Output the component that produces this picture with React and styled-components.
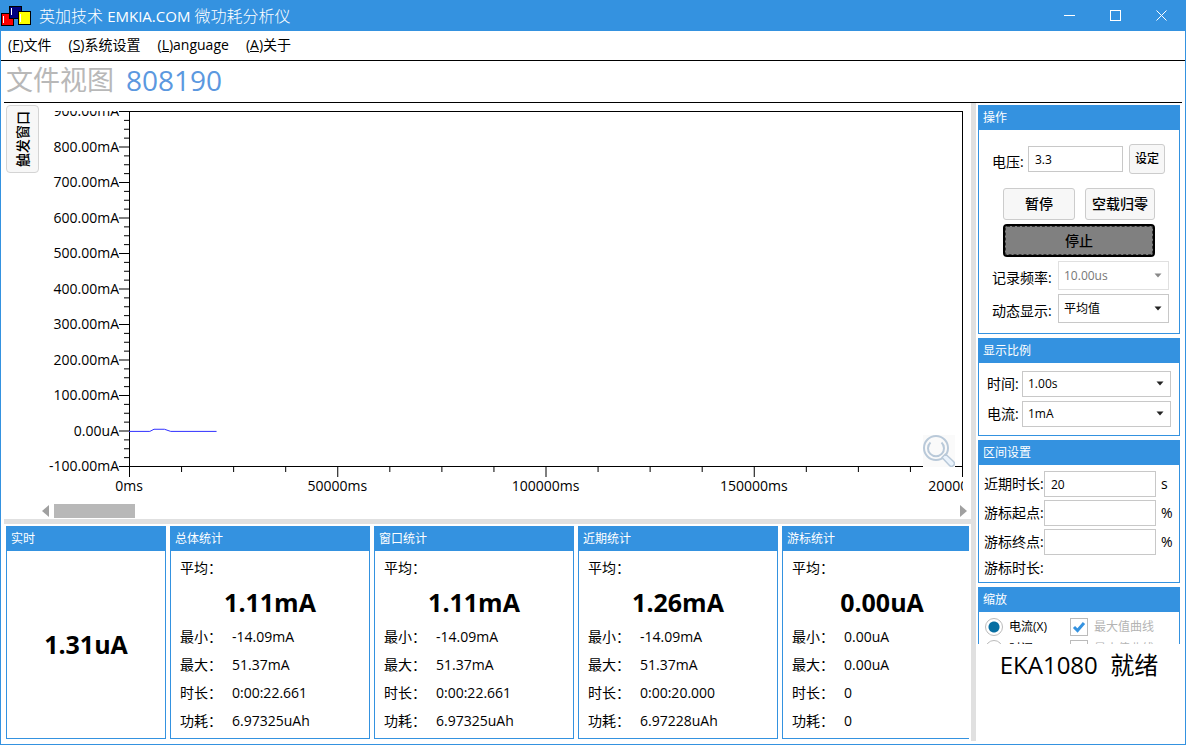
import { useState } from 'react';
import styled, { createGlobalStyle } from 'styled-components';

const BLUE = '#3492e0';
const SPLITTER = '#e0e0e0';

const GlobalStyle = createGlobalStyle`
  * {
    box-sizing: border-box;
  }

  body {
    margin: 0;
    background: #ffffff;
    color: #000000;
    font-family: 'Open Sans', 'Noto Sans CJK SC', sans-serif;
    font-size: 14px;
    line-height: 20px;
  }

  button,
  input,
  select {
    margin: 0;
    color: inherit;
    font: inherit;
  }
`;

// --- WINDOW FRAME ---

const Window = styled.div`
  display: flex;
  flex-direction: column;
  height: 100vh;
  overflow: hidden;
  border: 1px solid ${BLUE};
  border-top: none;
`;

const TitleBar = styled.header`
  display: flex;
  flex: none;
  align-items: center;
  height: 31px;
  padding-right: 1px;
  background: ${BLUE};
  color: #ffffff;
`;

const Title = styled.h1`
  flex: 1;
  margin: 0 0 0 7px;
  font-size: 16px;
  font-weight: 300;
  line-height: 24px;
`;

const TitleLatin = styled.span`
  font-size: 15px;
  font-weight: 400;
`;

const WindowButton = styled.button`
  display: flex;
  align-items: center;
  justify-content: center;
  width: 46px;
  height: 31px;
  padding: 0;
  border: none;
  background: transparent;

  svg {
    display: block;
    stroke: #ffffff;
    fill: none;
  }
`;

const MenuBar = styled.nav`
  display: flex;
  flex: none;
  align-items: center;
  gap: 17px;
  height: 30px;
  padding: 0 7px 2px;
  border-bottom: 1px solid #000000;
`;

const MenuItem = styled.button`
  padding: 0;
  border: none;
  background: transparent;
`;

const FileHeader = styled.div`
  display: flex;
  flex: none;
  align-items: center;
  gap: 12px;
  height: 42px;
  margin: 0 3px;
  padding: 0 2px 4px;
  border-bottom: 1px solid #000000;
  line-height: 36px;
`;

const FileLabel = styled.span`
  color: #b8b8b8;
  font-size: 27px;
`;

const FileName = styled.span`
  color: #5b98df;
  font-size: 28px;
`;

// --- LAYOUT ---

const Body = styled.main`
  display: flex;
  flex: 1;
  min-height: 0;
  margin: 0 3px 3px;
`;

const LeftSide = styled.div`
  display: flex;
  flex: 1;
  flex-direction: column;
  min-width: 0;
  border-right: 5px solid ${SPLITTER};
`;

const RightSide = styled.aside`
  display: flex;
  flex: none;
  flex-direction: column;
  width: 206px;
`;

const PanelScroller = styled.div`
  display: flex;
  flex: 1;
  flex-direction: column;
  gap: 4px;
  min-height: 0;
  overflow: hidden;
  padding: 2px 2px 0;
`;

const StatusText = styled.div`
  flex: none;
  height: 97px;
  padding-top: 5px;
  font-size: 24px;
  line-height: 32px;
  text-align: center;
  white-space: pre;
`;

const Panel = styled.section`
  display: flex;
  flex: none;
  flex-direction: column;
  width: ${(props) => props.$width || 'auto'};
  border: 1px solid ${BLUE};
`;

const PanelTitle = styled.h2`
  flex: none;
  margin: 0;
  padding: 0 4px;
  background: ${BLUE};
  color: #ffffff;
  font-size: 12px;
  font-weight: 400;
  line-height: 24px;
`;

// --- CHART ---

const ChartArea = styled.div`
  display: flex;
  flex: 1;
  min-height: 0;
  padding: 2px 4px 0 2px;
`;

const TriggerTab = styled.button`
  display: flex;
  flex: none;
  align-items: center;
  justify-content: center;
  width: 33px;
  height: 68px;
  padding: 0;
  border: 1px solid #d4d4d4;
  border-radius: 4px;
  background: #f7f7f7;
  font-weight: 500;

  span {
    writing-mode: vertical-rl;
    text-orientation: sideways;
    transform: rotate(180deg);
  }
`;

const ChartColumn = styled.div`
  display: flex;
  flex: 1;
  flex-direction: column;
  min-width: 0;
  padding: 6px 0 0 3px;
`;

const ChartGrid = styled.div`
  display: grid;
  flex: 1;
  grid-template-columns: 87px 1fr;
  grid-template-rows: 1fr 37px;
  min-height: 0;
  padding-right: 4px;
`;

const YAxis = styled.svg`
  width: 87px;
  height: calc(100% - 1px);
  overflow: visible;
  clip-path: inset(0 0 -20px 0);
`;

const XAxis = styled.svg`
  grid-column: 2;
  width: calc(100% - 1px);
  height: 37px;
  overflow: visible;
  clip-path: inset(0 -1px 0 -40px);
`;

const Plot = styled.div`
  position: relative;
  min-height: 0;
  border: 1px solid #000000;
`;

const Trace = styled.svg`
  position: absolute;
  inset: -1px;
  width: calc(100% + 2px);
  height: calc(100% + 2px);

  polyline {
    fill: none;
    stroke: #3030ff;
    stroke-width: 1;
    vector-effect: non-scaling-stroke;
  }
`;

const ZoomButton = styled.button`
  position: absolute;
  right: 7px;
  bottom: -1px;
  width: 32px;
  height: 32px;
  padding: 0;
  border: none;
  background: #fafafa;

  svg {
    display: block;
  }
`;

const ScrollRow = styled.div`
  display: flex;
  flex: none;
  align-items: center;
  height: 14px;
  margin-bottom: 1px;
`;

const ScrollArrow = styled.button`
  display: flex;
  flex: none;
  justify-content: ${(props) => (props.$end ? 'flex-end' : 'flex-start')};
  width: 12px;
  padding: 0;
  border: none;
  background: transparent;

  svg {
    display: block;
    fill: #a0a0a0;
  }
`;

const ScrollTrack = styled.div`
  flex: 1;
  height: 14px;
`;

const ScrollThumb = styled.div`
  width: 9%;
  height: 14px;
  background: #b8b8b8;
`;

// --- STATISTICS ---

const StatsRow = styled.div`
  display: flex;
  flex: none;
  gap: 4px;
  height: 222px;
  padding: 2px 0 2px 2px;
  border-top: 5px solid ${SPLITTER};
`;

const StatsClip = styled.div`
  display: flex;
  flex: 1;
  gap: 4px;
  min-width: 0;
  margin-right: 2px;
  overflow: hidden;
`;

const LiveValue = styled.div`
  display: flex;
  flex: 1;
  align-items: center;
  justify-content: center;
  padding-bottom: 2px;
  font-size: 25px;
  font-weight: 700;
`;

const StatList = styled.dl`
  display: grid;
  grid-template-columns: 52px 1fr;
  grid-template-rows: 28px 41px;
  grid-auto-rows: 28px;
  align-items: center;
  margin: 0;
  padding: 3px 9px;

  dt,
  dd {
    margin: 0;
  }
`;

const AverageLabel = styled.dt`
  grid-column: 1 / 3;
`;

const AverageValue = styled.dd`
  grid-column: 1 / 3;
  padding-bottom: 2px;
  font-size: 25px;
  font-weight: 700;
  text-align: center;
`;

// --- FORM CONTROLS ---

const FormBody = styled.div`
  display: flex;
  flex-direction: column;
  gap: ${(props) => props.$gap}px;
  padding: ${(props) => props.$padding};
`;

const FieldRow = styled.div`
  display: flex;
  align-items: ${(props) => props.$align || 'center'};
  gap: ${(props) => props.$gap || 0}px;
`;

const FieldLabel = styled.label`
  flex: none;
  width: ${(props) => props.$width}px;
  line-height: 24px;
  white-space: nowrap;
`;

const Unit = styled.span`
  width: 17px;
  padding-left: 5px;
`;

const TextInput = styled.input`
  flex: ${(props) => (props.$width ? 'none' : 1)};
  width: ${(props) => (props.$width ? `${props.$width}px` : 'auto')};
  min-width: 0;
  height: 26px;
  padding: 0 6px;
  border: 1px solid #c8c8c8;
  border-radius: 0;
  background: #ffffff;
  font-size: 12px;
`;

const SelectBox = styled.div`
  position: relative;
  flex: 1;
  min-width: 0;

  svg {
    position: absolute;
    top: 50%;
    right: 7px;
    margin-top: -3px;
    fill: ${(props) => (props.$disabled ? '#888888' : '#222222')};
    pointer-events: none;
  }
`;

const Select = styled.select`
  display: block;
  width: 100%;
  height: ${(props) => props.$height}px;
  padding: 0 5px;
  border: 1px solid #c8c8c8;
  border-radius: 0;
  background: #ffffff;
  appearance: none;
  font-size: 12px;

  &:disabled {
    border-color: #e0e0e0;
    color: #777777;
    opacity: 1;
  }
`;

const Button = styled.button`
  flex: ${(props) => (props.$width ? 'none' : 1)};
  width: ${(props) => (props.$width ? `${props.$width}px` : 'auto')};
  height: ${(props) => props.$height || 32}px;
  padding: 0;
  border: 1px solid #cccccc;
  border-radius: 3px;
  background: #f7f7f7;
  font-size: ${(props) => (props.$small ? 12 : 14)}px;
  font-weight: 500;
  white-space: nowrap;
`;

const StopButton = styled(Button)`
  border: 2px solid #000000;
  border-radius: 4px;
  background: #808080;
  outline: 1px dashed #333333;
  outline-offset: -3px;
`;

const CheckLabel = styled.label`
  display: flex;
  align-items: center;
  gap: 6px;
  width: ${(props) => props.$width || 'auto'};
  color: ${(props) => (props.$muted ? '#b4b4b4' : '#000000')};
  font-size: 12px;
  line-height: 18px;
  white-space: nowrap;
`;

const Radio = styled.input`
  appearance: none;
  width: 18px;
  height: 18px;
  border: 1px solid #bbbbbb;
  border-radius: 50%;
  background: #ffffff;

  &:checked {
    background: radial-gradient(circle, #066ea2 5px, #ffffff 6px);
  }
`;

const CheckMark = styled.span`
  display: grid;

  input,
  svg {
    grid-area: 1 / 1;
  }

  input {
    appearance: none;
    width: 18px;
    height: 18px;
    border: 1px solid #bbbbbb;
    background: #ffffff;
  }

  svg {
    z-index: 1;
    visibility: hidden;
    pointer-events: none;
  }

  input:checked + svg {
    visibility: visible;
  }
`;

// --- ICONS ---

function Logo() {
  return (
    <svg width="31" height="31" viewBox="0 0 31 31" shapeRendering="crispEdges" aria-hidden="true">
      <g stroke="#000000" strokeWidth="1">
        <rect x="0.5" y="13.5" width="12" height="12" fill="#ff0000" />
        <rect x="8.5" y="6.5" width="12" height="12" fill="#000080" />
        <rect x="17.5" y="11.5" width="12" height="13" fill="#ffff00" />
      </g>
      <g fill="#ffffff">
        <rect x="2" y="16" width="1" height="7" />
        <rect x="10" y="8" width="1" height="7" />
        <rect x="19" y="14" width="1" height="8" />
      </g>
    </svg>
  );
}

function MagnifierIcon() {
  return (
    <svg width="32" height="32" viewBox="0 0 32 32" fill="none" stroke="#b9c9d9" aria-hidden="true">
      <circle cx="13" cy="13" r="12" strokeWidth="2" />
      <path d="M7.5 7.5a8 8 0 1 0 11 0" strokeWidth="2" />
      <path
        d="M19 22.5l3.5-3.5 8 7.5a2.6 2.6 0 0 1-4 4z"
        fill="#eaf3fc"
        strokeWidth="1.5"
        strokeLinejoin="round"
      />
    </svg>
  );
}

function Caret() {
  return (
    <svg width="8" height="5" viewBox="0 0 8 5" aria-hidden="true">
      <path d="M0.5 0.5h7L4 4.5z" />
    </svg>
  );
}

// --- DATA ---

const MAX_TIME = 200000;
const MAX_CURRENT = 900;
const Y_LABELS = [900, 800, 700, 600, 500, 400, 300, 200, 100, 0, -100];
const X_LABELS = [0, 50000, 100000, 150000, 200000];
const SUBDIVISIONS = 4;

// [ms, mA]
const SAMPLES = [
  [0, 0],
  [5000, 0],
  [6000, 6],
  [8500, 6],
  [10000, 0],
  [21000, 0],
];

const STATS = [
  { title: '总体统计', avg: '1.11mA', min: '-14.09mA', max: '51.37mA', time: '0:00:22.661', energy: '6.97325uAh' },
  { title: '窗口统计', avg: '1.11mA', min: '-14.09mA', max: '51.37mA', time: '0:00:22.661', energy: '6.97325uAh' },
  { title: '近期统计', avg: '1.26mA', min: '-14.09mA', max: '51.37mA', time: '0:00:20.000', energy: '6.97228uAh' },
  { title: '游标统计', avg: '0.00uA', min: '0.00uA', max: '0.00uA', time: '0', energy: '0' },
];

const formatCurrent = (value) => (value === 0 ? '0.00uA' : `${value.toFixed(2)}mA`);

const ticks = (count) => Array.from({ length: count * SUBDIVISIONS + 1 }, (_, i) => i);

// --- COMPONENTS ---

function Chart() {
  const yCount = Y_LABELS.length - 1;
  const xCount = X_LABELS.length - 1;
  const points = SAMPLES.map(([t, value]) => `${t},${MAX_CURRENT - value}`).join(' ');

  return (
    <ChartGrid>
      <YAxis>
        {ticks(yCount).map((i) => {
          const size = i % SUBDIVISIONS === 0 ? 10 : 5;
          return (
            <rect key={i} x={87 - size} y={`${(i * 100) / (yCount * SUBDIVISIONS)}%`} width={size} height="1" />
          );
        })}
        {Y_LABELS.map((value, i) => (
          <text key={value} x="77" y={`${(i * 100) / yCount}%`} dy="5" textAnchor="end">
            {formatCurrent(value)}
          </text>
        ))}
      </YAxis>
      <Plot>
        <Trace viewBox={`0 0 ${MAX_TIME} 1000`} preserveAspectRatio="none">
          <polyline points={points} />
        </Trace>
        <ZoomButton type="button" aria-label="缩放">
          <MagnifierIcon />
        </ZoomButton>
      </Plot>
      <XAxis>
        {ticks(xCount).map((i) => (
          <rect
            key={i}
            x={`${(i * 100) / (xCount * SUBDIVISIONS)}%`}
            y="0"
            width="1"
            height={i % SUBDIVISIONS === 0 ? 10 : 5}
          />
        ))}
        {X_LABELS.map((value, i) => (
          <text key={value} x={`${(i * 100) / xCount}%`} y="24" textAnchor="middle">
            {`${value}ms`}
          </text>
        ))}
      </XAxis>
    </ChartGrid>
  );
}

function StatPanel({ title, avg, min, max, time, energy }) {
  return (
    <Panel $width="200px">
      <PanelTitle>{title}</PanelTitle>
      <StatList>
        <AverageLabel>平均：</AverageLabel>
        <AverageValue>{avg}</AverageValue>
        <dt>最小：</dt>
        <dd>{min}</dd>
        <dt>最大：</dt>
        <dd>{max}</dd>
        <dt>时长：</dt>
        <dd>{time}</dd>
        <dt>功耗：</dt>
        <dd>{energy}</dd>
      </StatList>
    </Panel>
  );
}

function SelectField({ id, label, labelWidth, options, height = 26, align, disabled }) {
  return (
    <FieldRow $align={align}>
      <FieldLabel htmlFor={id} $width={labelWidth}>
        {label}
      </FieldLabel>
      <SelectBox $disabled={disabled}>
        <Select id={id} $height={height} disabled={disabled}>
          {options.map((option) => (
            <option key={option}>{option}</option>
          ))}
        </Select>
        <Caret />
      </SelectBox>
    </FieldRow>
  );
}

function RangeField({ id, label, unit, value }) {
  return (
    <FieldRow>
      <FieldLabel htmlFor={id} $width={60}>
        {label}
      </FieldLabel>
      <TextInput id={id} defaultValue={value} />
      <Unit>{unit}</Unit>
    </FieldRow>
  );
}

function CurveCheck({ label }) {
  return (
    <CheckLabel $muted>
      <CheckMark>
        <input type="checkbox" defaultChecked />
        <svg width="18" height="18" viewBox="0 0 18 18" fill="none" aria-hidden="true">
          <path d="M4 9l3.5 3.5L14 5" stroke={BLUE} strokeWidth="3" />
        </svg>
      </CheckMark>
      {label}
    </CheckLabel>
  );
}

export default function App() {
  const [axis, setAxis] = useState('x');

  return (
    <>
      <GlobalStyle />
      <Window>
        <TitleBar>
          <Logo />
          <Title>
            英加技术 <TitleLatin>EMKIA.COM</TitleLatin> 微功耗分析仪
          </Title>
          <WindowButton type="button" aria-label="最小化">
            <svg width="11" height="11">
              <path d="M0 5.5h11" />
            </svg>
          </WindowButton>
          <WindowButton type="button" aria-label="最大化">
            <svg width="11" height="11">
              <rect x="0.5" y="0.5" width="10" height="10" />
            </svg>
          </WindowButton>
          <WindowButton type="button" aria-label="关闭">
            <svg width="11" height="11">
              <path d="M0.5 0.5l10 10M10.5 0.5l-10 10" />
            </svg>
          </WindowButton>
        </TitleBar>

        <MenuBar>
          <MenuItem type="button">(<u>F</u>)文件</MenuItem>
          <MenuItem type="button">(<u>S</u>)系统设置</MenuItem>
          <MenuItem type="button">(<u>L</u>)anguage</MenuItem>
          <MenuItem type="button">(<u>A</u>)关于</MenuItem>
        </MenuBar>

        <FileHeader>
          <FileLabel>文件视图</FileLabel>
          <FileName>808190</FileName>
        </FileHeader>

        <Body>
          <LeftSide>
            <ChartArea>
              <TriggerTab type="button">
                <span>触发窗口</span>
              </TriggerTab>
              <ChartColumn>
                <Chart />
                <ScrollRow>
                  <ScrollArrow type="button" aria-label="向左">
                    <svg width="7" height="12">
                      <path d="M7 0v12L0 6z" />
                    </svg>
                  </ScrollArrow>
                  <ScrollTrack>
                    <ScrollThumb />
                  </ScrollTrack>
                  <ScrollArrow type="button" aria-label="向右" $end>
                    <svg width="7" height="12">
                      <path d="M0 0v12L7 6z" />
                    </svg>
                  </ScrollArrow>
                </ScrollRow>
              </ChartColumn>
            </ChartArea>

            <StatsRow>
              <Panel $width="160px">
                <PanelTitle>实时</PanelTitle>
                <LiveValue>1.31uA</LiveValue>
              </Panel>
              <StatsClip>
                {STATS.map((stat) => (
                  <StatPanel key={stat.title} {...stat} />
                ))}
              </StatsClip>
            </StatsRow>
          </LeftSide>

          <RightSide>
            <PanelScroller>
              <Panel>
                <PanelTitle>操作</PanelTitle>
                <FormBody $gap={4} $padding="14px 10px 10px 13px">
                  <FieldRow $align="flex-end">
                    <FieldLabel htmlFor="voltage" $width={36}>
                      电压:
                    </FieldLabel>
                    <FieldRow $gap={6}>
                      <TextInput id="voltage" $width={95} defaultValue="3.3" />
                      <Button type="button" $width={36} $height={30} $small>
                        设定
                      </Button>
                    </FieldRow>
                  </FieldRow>
                  <FormBody $gap={4} $padding="10px 14px 0 11px">
                    <FieldRow $gap={10}>
                      <Button type="button">暂停</Button>
                      <Button type="button" $width={70}>
                        空载归零
                      </Button>
                    </FieldRow>
                    <FieldRow>
                      <StopButton type="button" $height={33}>
                        停止
                      </StopButton>
                    </FieldRow>
                  </FormBody>
                  <SelectField
                    id="rate"
                    label="记录频率:"
                    labelWidth={66}
                    options={['10.00us']}
                    height={29}
                    align="flex-end"
                    disabled
                  />
                  <SelectField
                    id="mode"
                    label="动态显示:"
                    labelWidth={66}
                    options={['平均值', '最大值', '最小值']}
                    height={29}
                    align="flex-end"
                  />
                </FormBody>
              </Panel>

              <Panel>
                <PanelTitle>显示比例</PanelTitle>
                <FormBody $gap={4} $padding="8px">
                  <SelectField id="time" label="时间:" labelWidth={35} options={['1.00s']} />
                  <SelectField id="current" label="电流:" labelWidth={35} options={['1mA']} />
                </FormBody>
              </Panel>

              <Panel>
                <PanelTitle>区间设置</PanelTitle>
                <FormBody $gap={3} $padding="6px 6px 4px 5px">
                  <RangeField id="recent" label="近期时长:" unit="s" value="20" />
                  <RangeField id="start" label="游标起点:" unit="%" value="" />
                  <RangeField id="end" label="游标终点:" unit="%" value="" />
                  <span>游标时长:</span>
                </FormBody>
              </Panel>

              <Panel>
                <PanelTitle>缩放</PanelTitle>
                <FormBody $gap={4} $padding="6px">
                  <FieldRow>
                    <CheckLabel $width="85px">
                      <Radio type="radio" name="axis" checked={axis === 'x'} onChange={() => setAxis('x')} />
                      电流(X)
                    </CheckLabel>
                    <CurveCheck label="最大值曲线" />
                  </FieldRow>
                  <FieldRow>
                    <CheckLabel $width="85px">
                      <Radio type="radio" name="axis" checked={axis === 'y'} onChange={() => setAxis('y')} />
                      时间(Y)
                    </CheckLabel>
                    <CurveCheck label="最小值曲线" />
                  </FieldRow>
                </FormBody>
              </Panel>
            </PanelScroller>
            <StatusText>EKA1080  就绪</StatusText>
          </RightSide>
        </Body>
      </Window>
    </>
  );
}
